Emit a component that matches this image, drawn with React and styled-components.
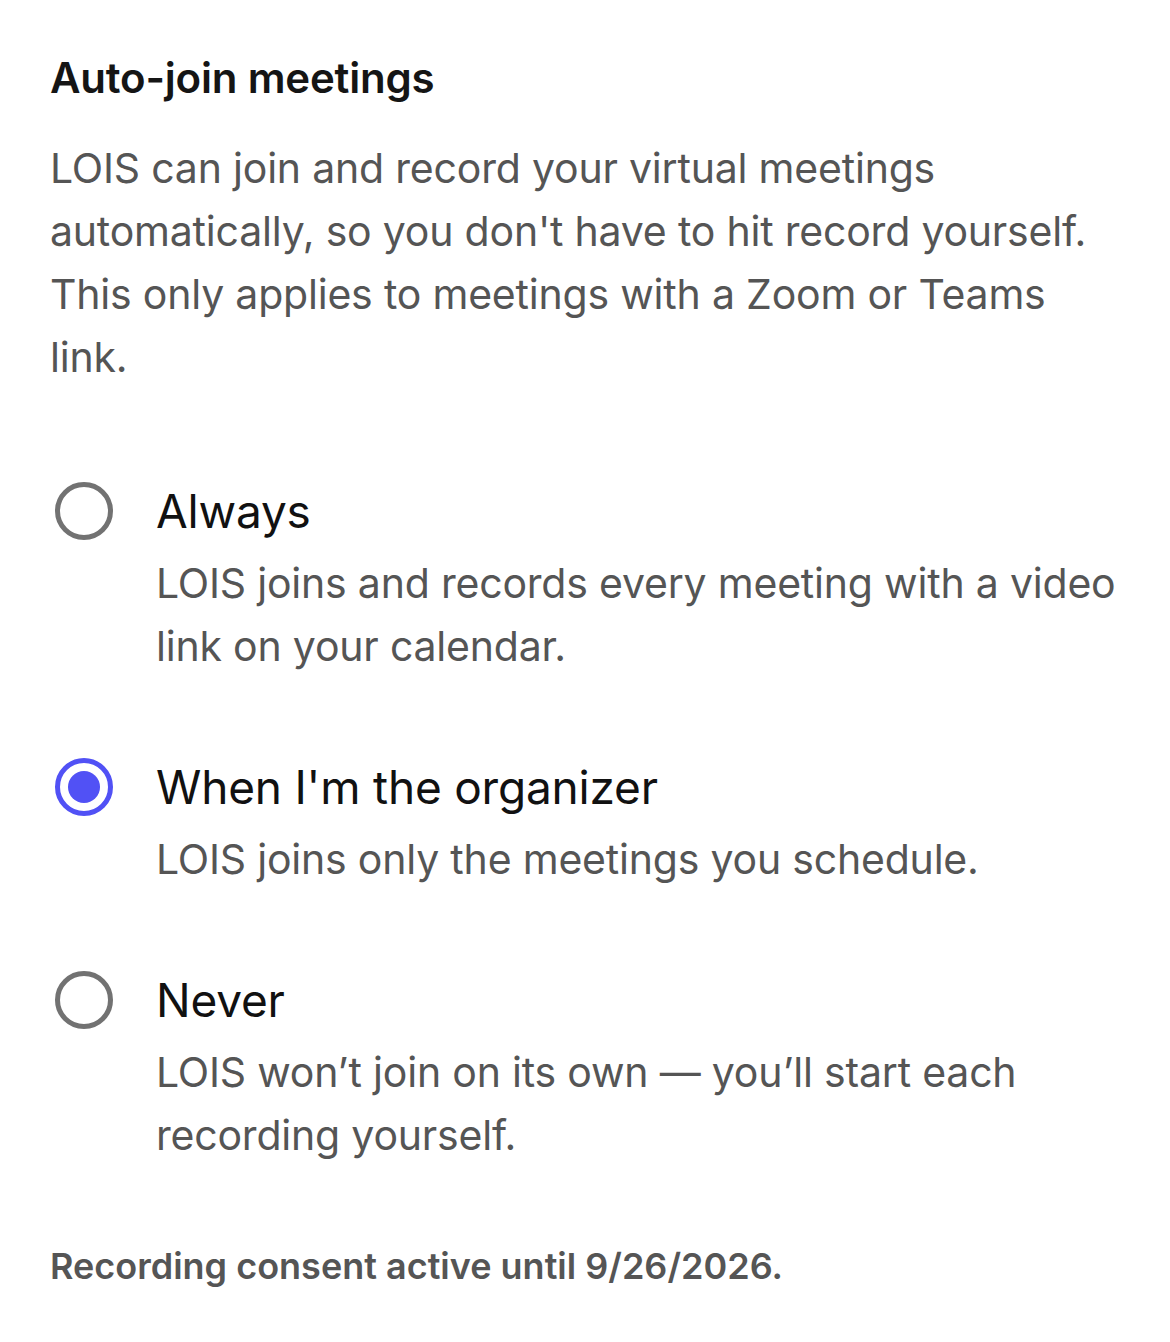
import React, { useState } from "react";
import styled, { createGlobalStyle } from "styled-components";

const Global = createGlobalStyle`
  html, body { margin: 0; padding: 0; background: #ffffff; }
  body { font-family: Inter, "Noto Sans", "Liberation Sans", sans-serif; -webkit-font-smoothing: antialiased; }
`;

const Page = styled.div`
  width: 1170px;
  box-sizing: border-box;
  padding: 50px 50px 40px 50px;
  display: flex;
  flex-direction: column;
`;

const Title = styled.h2`
  margin: 0;
  font-size: 42px;
  line-height: 56px;
  font-weight: 600;
  color: #151515;
  letter-spacing: -0.2px;
`;

const Description = styled.p`
  margin: 31px 0 0 0;
  font-size: 41px;
  line-height: 63px;
  font-weight: 400;
  color: #555555;
  letter-spacing: -0.2px;
`;

const Options = styled.div`
  margin-top: 89px;
  display: flex;
  flex-direction: column;
  gap: 76px;
`;

const Option = styled.label`
  display: grid;
  grid-template-columns: 58px 1fr;
  column-gap: 43px;
  padding-left: 5px;
  cursor: pointer;
`;

const Radio = styled.span`
  width: 58px;
  height: 58px;
  box-sizing: border-box;
  border-radius: 50%;
  border: 5px solid ${(p) => (p.$checked ? "#5151f5" : "#727272")};
  display: flex;
  align-items: center;
  justify-content: center;
  margin-top: 4px;
  &::after {
    content: "";
    width: 32px;
    height: 32px;
    border-radius: 50%;
    background: #5151f5;
    display: ${(p) => (p.$checked ? "block" : "none")};
  }
`;

const OptionText = styled.div`
  display: flex;
  flex-direction: column;
  gap: 8px;
`;

const OptionTitle = styled.div`
  font-size: 46px;
  line-height: 66px;
  color: #111111;
  font-weight: 400;
  letter-spacing: -0.2px;
`;

const OptionDesc = styled.div`
  font-size: 41px;
  line-height: 63px;
  color: #555555;
  letter-spacing: -0.2px;
`;

const Footer = styled.p`
  margin: 74px 0 0 0;
  font-size: 36px;
  line-height: 50px;
  font-weight: 600;
  color: #555555;
`;

const OPTIONS = [
  { id: "always", title: "Always", desc: "LOIS joins and records every meeting with a video link on your calendar." },
  { id: "organizer", title: "When I'm the organizer", desc: "LOIS joins only the meetings you schedule." },
  { id: "never", title: "Never", desc: "LOIS won\u2019t join on its own \u2014 you\u2019ll start each recording yourself." },
];

export default function App() {
  const [value, setValue] = useState("organizer");
  return (
    <>
      <Global />
      <Page>
        <Title>Auto-join meetings</Title>
        <Description>
          LOIS can join and record your virtual meetings automatically, so you don't have to hit record yourself. This only applies to meetings with a Zoom or Teams link.
        </Description>
        <Options role="radiogroup">
          {OPTIONS.map((o) => (
            <Option key={o.id} onClick={() => setValue(o.id)}>
              <Radio $checked={value === o.id} role="radio" aria-checked={value === o.id} />
              <OptionText>
                <OptionTitle>{o.title}</OptionTitle>
                <OptionDesc>{o.desc}</OptionDesc>
              </OptionText>
            </Option>
          ))}
        </Options>
        <Footer>Recording consent active until 9/26/2026.</Footer>
      </Page>
    </>
  );
}
